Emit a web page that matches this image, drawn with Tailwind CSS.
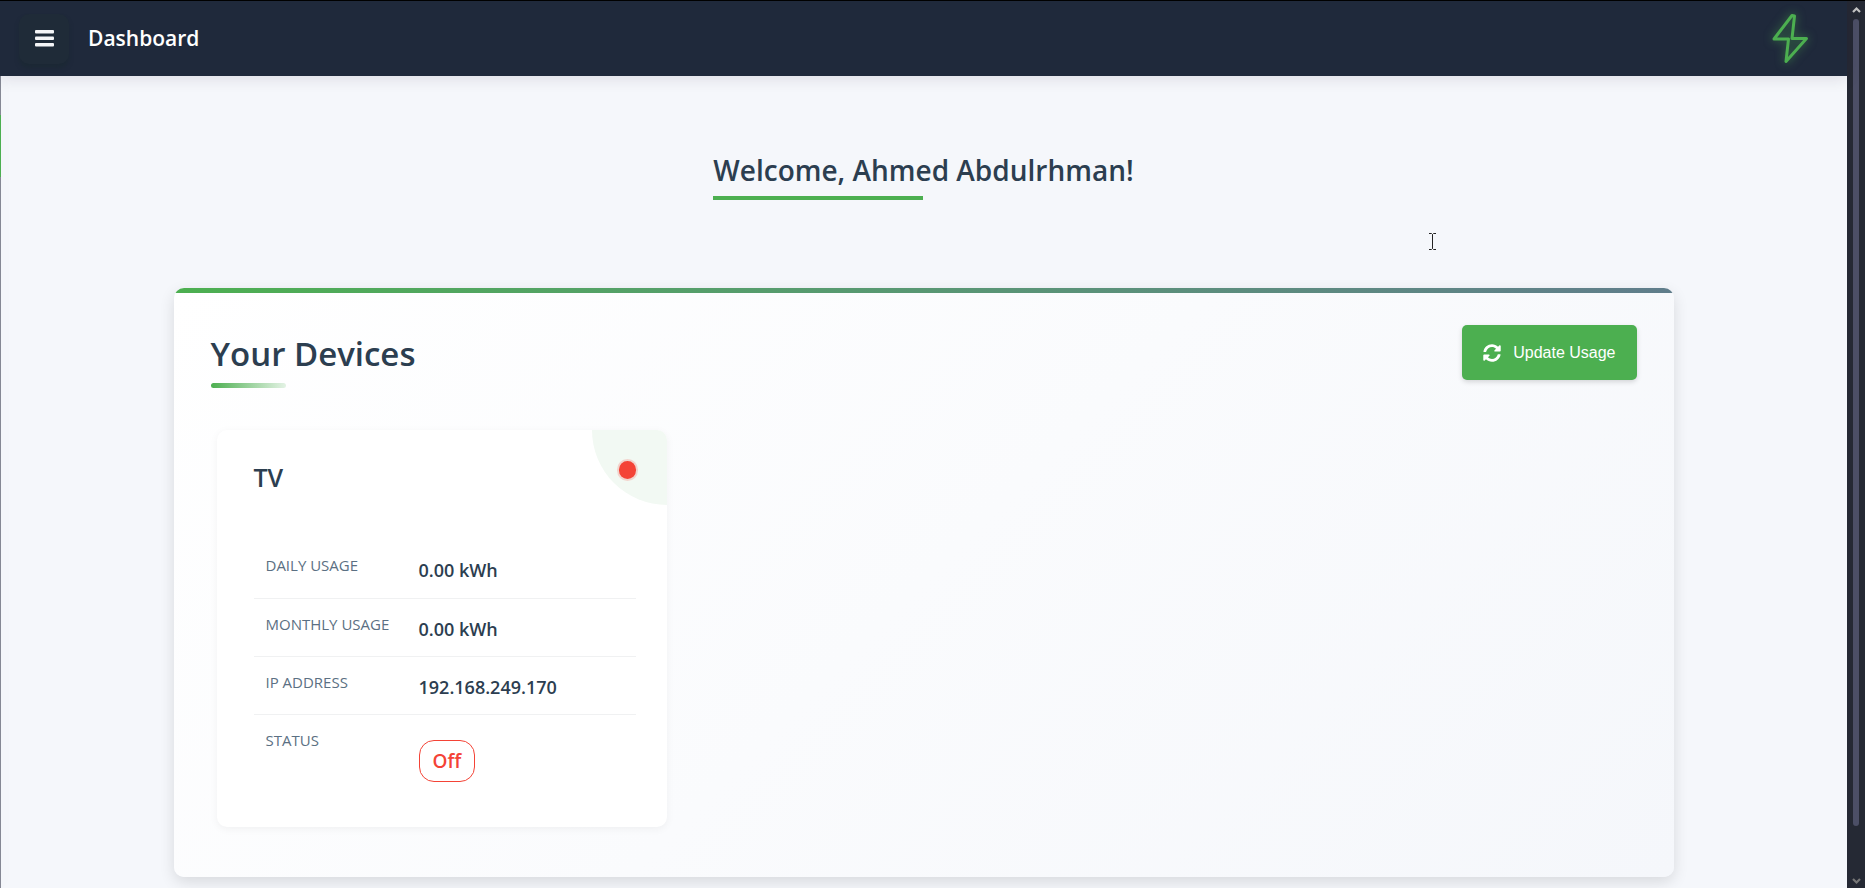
<!DOCTYPE html>
<html lang="en">
<head>
<meta charset="utf-8">
<title>Dashboard</title>
<script src="https://cdn.jsdelivr.net/npm/@tailwindcss/browser@4"></script>
</head>
<body class="flex h-screen overflow-hidden bg-[#f5f7fb] font-['Open_Sans','Noto_Sans',sans-serif] text-[#2c3e50]">
<div class="relative flex min-w-0 flex-1 flex-col">
  <header class="relative z-10 flex h-[76px] shrink-0 items-center justify-between border-t border-black bg-[#1f293b] pr-[37px] pl-[19px] shadow-[0_2px_15px_rgba(30,20,50,0.12)]">
    <div class="flex items-center gap-[19px]">
      <button type="button" aria-label="Open menu" class="flex size-[50px] items-center justify-center rounded-[10px] bg-[#1f2b38] text-white shadow-[0_4px_4px_rgba(25,40,48,0.6)]">
        <svg class="h-[17px] w-[19px]" viewBox="0 0 19 17" fill="#f4f5f7" aria-hidden="true"><rect width="19" height="3.4" rx="1"/><rect y="6.5" width="19" height="3.4" rx="1"/><rect y="13" width="19" height="3.4" rx="1"/></svg>
      </button>
      <h1 class="pb-[2px] text-[21px] leading-8 font-semibold text-white">Dashboard</h1>
    </div>
    <svg class="h-[54px] w-[42px] overflow-visible drop-shadow-[0_0_5px_rgba(76,175,80,0.6)]" viewBox="0 0 42 54" fill="none" stroke="#4caf50" stroke-width="3" stroke-linejoin="round" aria-hidden="true"><path d="M24 3.500 26.500 4 24 26.500H38.500L18 49.500 20.500 27H6Z"/></svg>
  </header>

  <div class="absolute top-[76px] bottom-0 left-0 w-px bg-[#858894] shadow-[0_0_15px_rgba(0,0,0,0.12)]"><div class="mt-[39px] h-[62px] bg-[#4caf50]"></div></div>

  <main class="flex flex-1 flex-col items-center px-10">
    <h2 class="mt-[73px] text-[28px] leading-[43px] font-semibold">Welcome, Ahmed Abdulrhman!<span class="mt-[4px] block h-1 w-1/2 bg-[#4caf50]"></span></h2>

    <section class="relative mt-[88px] w-full max-w-[1500px] overflow-hidden rounded-[10px] bg-linear-135 from-white to-[#f5f7fb] px-[37px] pt-[37px] pb-[50px] shadow-[0_5px_15px_rgba(0,0,0,0.12)]">
      <div class="absolute inset-x-0 top-0 h-[5px] bg-linear-to-r from-[#4caf50] to-[#607d8b]"></div>
      <div class="flex items-start justify-between">
        <h2 class="pt-[5px] text-[33px] leading-[48px] font-semibold">Your Devices<span class="mt-[5px] block h-[5px] w-[75px] rounded-full bg-linear-to-r from-[#4caf50] to-[#4caf50]/15"></span></h2>
        <button type="button" class="flex h-[55px] items-center gap-[12px] rounded-[5px] bg-[#4caf50] px-[21px] font-['Liberation_Sans',sans-serif] text-base text-white shadow-[0_2px_5px_rgba(0,0,0,0.15)]">
          <svg class="size-[18px]" viewBox="0 0 512 512" fill="currentColor" aria-hidden="true"><path d="M370.700 133.300C339.500 104 298.900 88 255.800 88c-77.500.1-144.300 53.200-162.800 126.900-1.300 5.400-6.100 9.100-11.700 9.100H24.100c-7.500 0-13.200-6.800-11.800-14.200C33.900 94.900 134.800 8 256 8c66.400 0 126.800 26.100 171.300 68.700L463 41C478.100 25.900 504 36.600 504 57.900V192c0 13.300-10.700 24-24 24H345.900c-21.400 0-32.100-25.900-17-41l41.800-41.700zM32 296h134.100c21.400 0 32.100 25.900 17 41l-41.800 41.800c31.300 29.300 71.800 45.300 114.900 45.300 77.400-.1 144.300-53.100 162.800-126.800 1.300-5.400 6.100-9.100 11.700-9.100h57.300c7.500 0 13.200 6.800 11.800 14.200C478.100 417.100 377.200 504 256 504c-66.400 0-126.800-26.100-171.300-68.700L49 471c-15.100 15.100-41 4.400-41-16.900V320c0-13.300 10.700-24 24-24z"/></svg>
          Update Usage
        </button>
      </div>

      <div class="mt-[42px] grid grid-cols-3 px-[6px]">
        <article class="relative w-full max-w-[450px] overflow-hidden rounded-[10px] bg-white pt-[26px] pr-[31px] pb-[33px] pl-[37px] shadow-[0_2px_8px_rgba(0,0,0,0.05)]">
          <div class="absolute top-0 right-0 size-[75px] rounded-bl-full bg-[#f2f9f3]"></div>
          <span class="absolute top-[31px] right-[31px] h-[18px] w-[17px] rounded-full bg-[#f44336] ring-2 ring-[#f44336]/20" role="img" aria-label="Device is off"></span>
          <h3 class="text-[25px] leading-[42px] font-semibold">TV</h3>
          <table class="mt-[42px] w-full text-left align-top">
            <tbody>
              <tr class="h-[58px] border-b border-[#f0f1f2]"><th scope="row" class="w-[153px] px-3 pt-[13px] align-top text-[15px] leading-6 font-normal whitespace-nowrap text-[#5b7083] uppercase">Daily Usage</th><td class="px-3 pt-[15px] align-top text-[18px] leading-[31px] font-semibold">0.00 kWh</td></tr>
              <tr class="h-[58px] border-b border-[#f0f1f2]"><th scope="row" class="w-[153px] px-3 pt-[13px] align-top text-[15px] leading-6 font-normal whitespace-nowrap text-[#5b7083] uppercase">Monthly Usage</th><td class="px-3 pt-[15px] align-top text-[18px] leading-[31px] font-semibold">0.00 kWh</td></tr>
              <tr class="h-[58px] border-b border-[#f0f1f2]"><th scope="row" class="w-[153px] px-3 pt-[13px] align-top text-[15px] leading-6 font-normal whitespace-nowrap text-[#5b7083] uppercase">IP Address</th><td class="px-3 pt-[15px] align-top text-[18px] leading-[31px] font-semibold">192.168.249.170</td></tr>
              <tr class="h-[80px]"><th scope="row" class="w-[153px] px-3 pt-[13px] align-top text-[15px] leading-6 font-normal whitespace-nowrap text-[#5b7083] uppercase">Status</th><td class="px-3 pt-[25px] align-top text-[19px] font-semibold"><span class="inline-flex h-[42px] items-center rounded-[15px] border border-[#f44336] px-[13px] pt-[2px] leading-none text-[#f44336]">Off</span></td></tr>
            </tbody>
          </table>
        </article>
      </div>
    </section>
  </main>

  <svg class="absolute top-[233px] left-[1428px] z-20 h-[17px] w-[9px]" viewBox="0 0 9 17" fill="none" stroke="#222" stroke-width="1" aria-hidden="true"><path d="M1 .5h2.500l1 1 1-1H8M4.500 1.500v14M1 16.500h2.500l1-1 1 1H8"/></svg>
</div>

<div class="flex w-[18px] shrink-0 flex-col items-center border-t border-black bg-[#252934]" aria-hidden="true">
  <svg class="mt-[5px] h-[8px] w-[9px]" viewBox="0 0 9 8" fill="none" stroke="#c4c4c4" stroke-width="2.200"><path d="M1 6 4.500 2.500 8 6"/></svg>
  <div class="mt-[5px] mb-[51px] w-[6px] flex-1 rounded-full bg-[#4c4f66]"></div>
  <svg class="mb-[3px] h-[8px] w-[9px]" viewBox="0 0 9 8" fill="none" stroke="#777" stroke-width="2.200"><path d="M1 2 4.500 5.500 8 2"/></svg>
</div>
</body>
</html>
